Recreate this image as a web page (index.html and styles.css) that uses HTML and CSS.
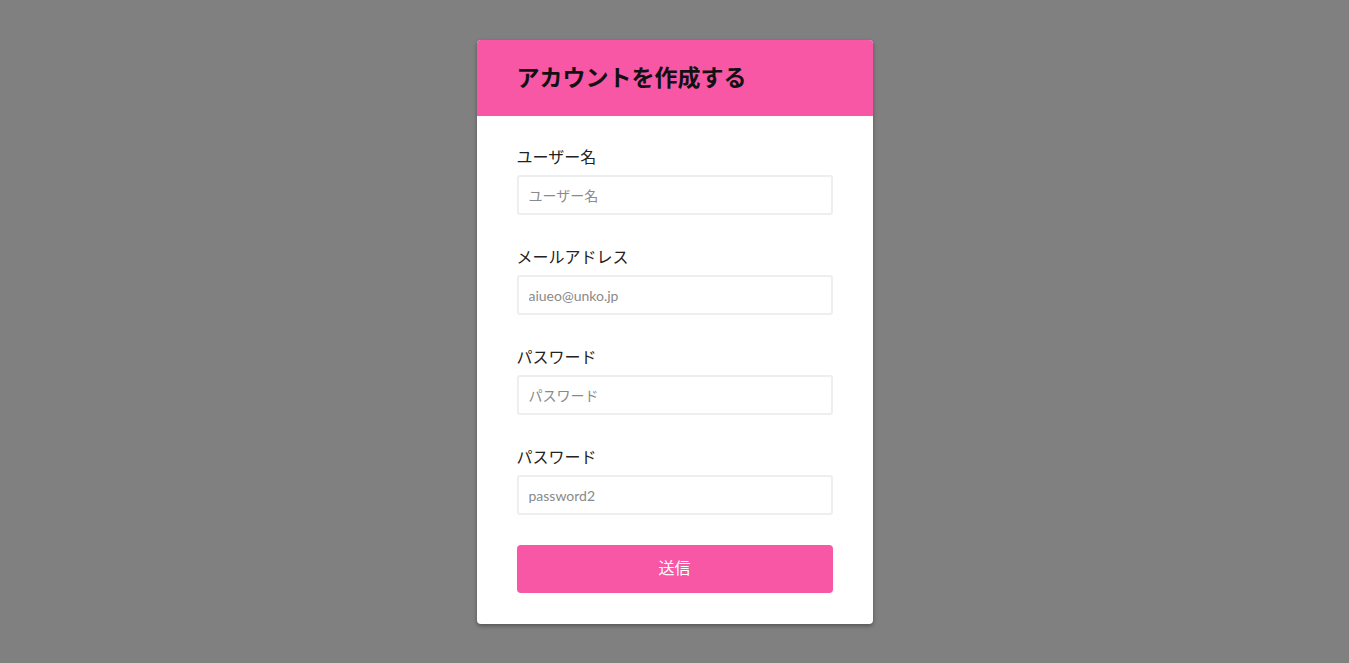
FILE: index.html
```html
<!DOCTYPE html>
<html lang="ja">
<head>
<meta charset="utf-8">
<title>アカウントを作成する</title>
<link rel="stylesheet" href="styles.css">
</head>
<body>
<div class="page">
  <form class="card">
    <div class="card-header"><h1 class="title">アカウントを作成する</h1></div>
    <div class="card-body">
      <div class="field">
        <label class="label">ユーザー名</label>
        <input class="input" type="text" placeholder="ユーザー名">
      </div>
      <div class="field">
        <label class="label">メールアドレス</label>
        <input class="input" type="email" placeholder="aiueo@unko.jp">
      </div>
      <div class="field">
        <label class="label">パスワード</label>
        <input class="input" type="password" placeholder="パスワード">
      </div>
      <div class="field">
        <label class="label">パスワード</label>
        <input class="input" type="password" placeholder="password2">
      </div>
      <button class="submit" type="button">送信</button>
    </div>
  </form>
</div>
</body>
</html>
```
FILE: styles.css
```css
html, body {
  margin: 0;
  padding: 0;
  height: 100%;
}
body {
  background: #808080;
  font-family: Lato, "Noto Sans CJK JP", sans-serif;
  color: #222;
}
.page {
  display: flex;
  justify-content: center;
  padding-top: 40px;
}
.card {
  width: 396px;
  background: #fff;
  border-radius: 4px;
  overflow: hidden;
  box-shadow: 0 2px 4px rgba(0,0,0,0.35);
}
.card-header {
  background: #f857a6;
  height: 76px;
  display: flex;
  align-items: center;
  padding: 0 40px;
}
.title {
  margin: 0;
  font-size: 23px;
  font-weight: 700;
  color: #111;
  font-family: "Noto Sans CJK JP", sans-serif;
  line-height: 1;
  margin-top: -3px;
}
.card-body {
  padding: 29px 40px 31px;
  display: flex;
  flex-direction: column;
}
.field {
  display: flex;
  flex-direction: column;
  margin-bottom: 30px;
}
.label {
  font-size: 16px;
  line-height: 24px;
  margin-bottom: 6px;
  color: #222;
}
.input {
  box-sizing: border-box;
  height: 40px;
  border: 2px solid #eeeeee;
  border-radius: 3px;
  padding: 0 10px;
  font-family: Lato, "Noto Sans CJK JP", sans-serif;
  font-size: 14px;
  outline: none;
}
.input::placeholder {
  color: #8a8a8a;
}
.submit {
  height: 48px;
  border: none;
  border-radius: 4px;
  background: #f857a6;
  color: #fff;
  font-size: 16px;
  padding: 0 0 4px;
  font-family: Lato, "Noto Sans CJK JP", sans-serif;
  cursor: pointer;
}
```
